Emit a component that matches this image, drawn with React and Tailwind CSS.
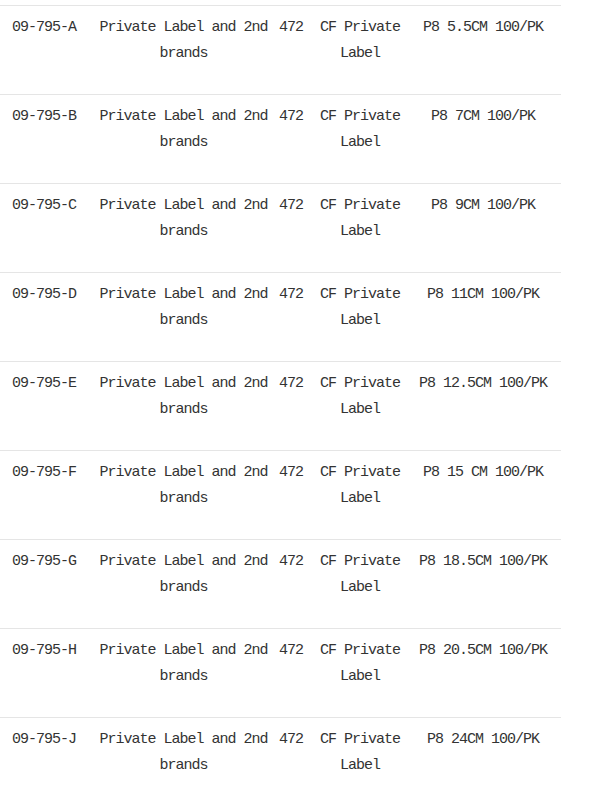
import React from 'react';

const rows = [
    { code: '09-795-A', size: 'P8 5.5CM 100/PK' },
    { code: '09-795-B', size: 'P8 7CM 100/PK' },
    { code: '09-795-C', size: 'P8 9CM 100/PK' },
    { code: '09-795-D', size: 'P8 11CM 100/PK' },
    { code: '09-795-E', size: 'P8 12.5CM 100/PK' },
    { code: '09-795-F', size: 'P8 15 CM 100/PK' },
    { code: '09-795-G', size: 'P8 18.5CM 100/PK' },
    { code: '09-795-H', size: 'P8 20.5CM 100/PK' },
    { code: '09-795-J', size: 'P8 24CM 100/PK' },
];

const App = () => {
    return (
        <div className="bg-white min-h-screen pt-[5px] text-[#333] font-['Liberation_Mono',monospace] text-[15px] leading-[26px] tracking-[-1px]">
            <div className="w-[561px]">
                {rows.map((row) => (
                    <div
                        key={row.code}
                        className="grid grid-cols-[88px_191px_24px_114px_144px] border-t border-[#e5e5e5] h-[89px] text-center pt-[9px]"
                    >
                        <div>{row.code}</div>
                        <div className="px-[8px]">Private Label and 2nd brands</div>
                        <div className="whitespace-nowrap">472</div>
                        <div className="px-[12px]">CF Private Label</div>
                        <div className="pr-[12px] whitespace-nowrap">{row.size}</div>
                    </div>
                ))}
            </div>
        </div>
    );
};

export default App;
